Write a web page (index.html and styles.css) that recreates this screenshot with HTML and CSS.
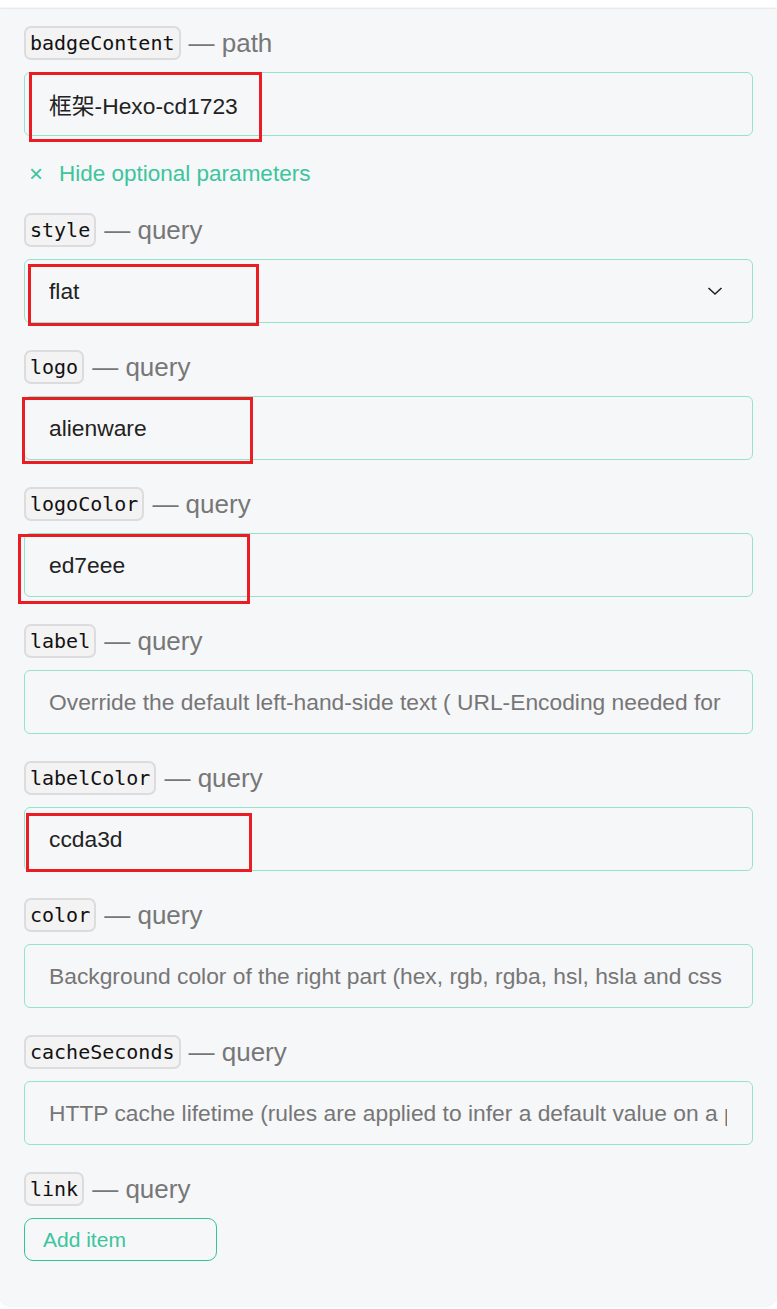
FILE: index.html
```html
<!DOCTYPE html>
<html>
<head>
<meta charset="utf-8">
<link rel="stylesheet" href="styles.css">
</head>
<body>
<div class="panel">
  <div class="fields">
    <div class="field">
      <div class="lbl"><code class="pill">badgeContent</code><span class="kind">— path</span></div>
      <div class="ctl"><span class="val">框架-Hexo-cd1723</span></div>
    </div>
    <div class="toggle"><span class="x">×</span><span>Hide optional parameters</span></div>
    <div class="field">
      <div class="lbl"><code class="pill">style</code><span class="kind">— query</span></div>
      <div class="ctl select"><span class="val">flat</span>
        <svg class="chev" width="16" height="10" viewBox="0 0 16 10"><path d="M1.5 2 L8 8 L14.5 2" fill="none" stroke="#222" stroke-width="1.6"/></svg>
      </div>
    </div>
    <div class="field">
      <div class="lbl"><code class="pill">logo</code><span class="kind">— query</span></div>
      <div class="ctl"><span class="val">alienware</span></div>
    </div>
    <div class="field">
      <div class="lbl"><code class="pill">logoColor</code><span class="kind">— query</span></div>
      <div class="ctl"><span class="val">ed7eee</span></div>
    </div>
    <div class="field">
      <div class="lbl"><code class="pill">label</code><span class="kind">— query</span></div>
      <div class="ctl"><span class="val ph">Override the default left-hand-side text ( URL-Encoding needed for spaces or special characters!)</span></div>
    </div>
    <div class="field">
      <div class="lbl"><code class="pill">labelColor</code><span class="kind">— query</span></div>
      <div class="ctl"><span class="val">ccda3d</span></div>
    </div>
    <div class="field">
      <div class="lbl"><code class="pill">color</code><span class="kind">— query</span></div>
      <div class="ctl"><span class="val ph">Background color of the right part (hex, rgb, rgba, hsl, hsla and css named colors supported).</span></div>
    </div>
    <div class="field">
      <div class="lbl"><code class="pill">cacheSeconds</code><span class="kind">— query</span></div>
      <div class="ctl"><span class="val ph">HTTP cache lifetime (rules are applied to infer a default value on a per-badge basis, any values specified below the default will be ignored).</span></div>
    </div>
    <div class="field">
      <div class="lbl"><code class="pill">link</code><span class="kind">— query</span></div>
      <div><button class="add">Add item</button></div>
    </div>
  </div>
  <div class="mark m1"></div>
  <div class="mark m2"></div>
  <div class="mark m3"></div>
  <div class="mark m4"></div>
  <div class="mark m5"></div>
</div>
</body>
</html>
```
FILE: styles.css
```css
html, body { margin: 0; padding: 0; background: #fff; }
body { font-family: "Liberation Sans", Arial, "Noto Sans CJK SC", sans-serif; }
.panel {
  position: relative;
  margin-top: 9px;
  width: 776px;
  height: 1298px;
  box-sizing: border-box;
  background: #f6f7f9;
  border-radius: 0 0 9px 9px;
  box-shadow: 0 -1px 2px rgba(0,0,0,0.12);
  padding: 17px 24px 0 24px;
}
.fields { display: flex; flex-direction: column; gap: 27px; }
.field { display: flex; flex-direction: column; gap: 12px; }
.lbl { display: flex; align-items: center; height: 34px; }
.pill {
  font-family: "DejaVu Sans Mono", "Liberation Mono", monospace;
  font-size: 20px;
  color: #111;
  background: #f3f3f4;
  border: 2px solid #dcdcde;
  border-radius: 7px;
  height: 34px;
  box-sizing: border-box;
  padding: 0 4px;
  display: flex;
  align-items: center;
}
.kind { color: #777; font-size: 26px; margin-left: 8px; }
.ctl {
  width: 729px;
  height: 64px;
  box-sizing: border-box;
  border: 1px solid #96e3cb;
  border-radius: 6px;
  display: flex;
  align-items: center;
  padding: 0 25px 0 24px;
  font-size: 22.8px;
  color: #222;
}
.val { flex: 1; white-space: nowrap; overflow: hidden; min-width: 0; }
.ph { color: #767676; }
.select { padding-right: 29px; }
.chev { flex: none; }
.toggle {
  display: flex; align-items: center; height: 28px;
  color: #3cc59c; font-size: 22.5px;
  margin-top: -3px; margin-bottom: -2px;
}
.x { font-size: 24px; margin-left: 5px; width: 30px; }
.add {
  width: 193px; height: 43px;
  border: 1px solid #35c498;
  border-radius: 9px;
  background: transparent;
  color: #3cc59c;
  font-family: "Liberation Sans", Arial, sans-serif;
  font-size: 21px;
  text-align: left;
  padding: 0 0 0 18px;
}
.mark { position: absolute; border: 3px solid #ea1c24; box-sizing: border-box; }
.m1 { left: 29px; top: 63px; width: 233px; height: 70px; }
.m2 { left: 28px; top: 255px; width: 231px; height: 62px; }
.m3 { left: 22px; top: 388px; width: 231px; height: 67px; }
.m4 { left: 18px; top: 525px; width: 232px; height: 70px; }
.m5 { left: 26px; top: 804px; width: 226px; height: 59px; }
```
